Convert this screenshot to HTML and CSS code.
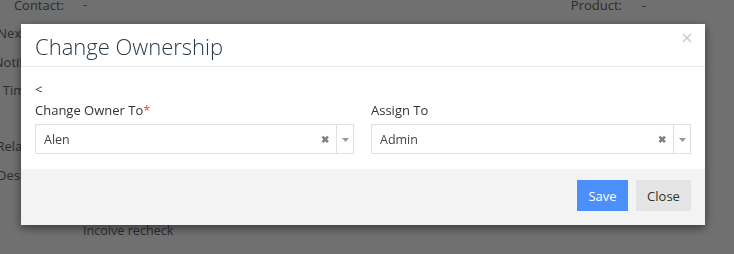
FILE: index.html
```html
<!DOCTYPE html>
<html>
<head>
<meta charset="utf-8">
<link rel="stylesheet" href="styles.css">
</head>
<body>
<div class="page">
  <div class="details">
    <div class="row"><span class="lbl">Contact:</span><span class="val">-</span><span class="lbl2">Product:</span><span class="val2">-</span></div>
    <div class="row"><span class="lbl">Next Visits:</span><span class="val"></span></div>
    <div class="row"><span class="lbl">Notified To:</span><span class="val"></span></div>
    <div class="row"><span class="lbl">Timelines:</span><span class="val"></span></div>
    <div class="row"><span class="lbl"></span><span class="val"></span></div>
    <div class="row"><span class="lbl">Related To:</span><span class="val"></span></div>
    <div class="row"><span class="lbl">Descriptor:</span><span class="val"></span></div>
    <div class="row"><span class="lbl"></span><span class="val"></span></div>
    <div class="row"><span class="lbl"></span><span class="val">Incoive recheck</span></div>
  </div>
</div>
<div class="overlay"></div>
<div class="modal">
  <div class="modal-header">
    <h4 class="modal-title">Change Ownership</h4>
    <span class="close-x">
      <svg width="10" height="10" viewBox="0 0 10 10"><path d="M1 1L9 9M9 1L1 9" stroke="#c8c8c8" stroke-width="1.3"/></svg>
    </span>
  </div>
  <div class="modal-body">
    <div class="back">&lt;</div>
    <div class="fields">
      <div class="field">
        <label class="flabel">Change Owner To<span class="req">*</span></label>
        <div class="select">
          <span class="sval">Alen</span>
          <span class="sclear">&#10006;</span>
          <span class="sarrow"><svg width="7" height="4" viewBox="0 0 7 4"><path d="M0 0H7L3.5 4Z" fill="#999"/></svg></span>
        </div>
      </div>
      <div class="field">
        <label class="flabel">Assign To</label>
        <div class="select">
          <span class="sval">Admin</span>
          <span class="sclear">&#10006;</span>
          <span class="sarrow"><svg width="7" height="4" viewBox="0 0 7 4"><path d="M0 0H7L3.5 4Z" fill="#999"/></svg></span>
        </div>
      </div>
    </div>
  </div>
  <div class="modal-footer">
    <button class="btn btn-save">Save</button>
    <button class="btn btn-close">Close</button>
  </div>
</div>
</body>
</html>
```
FILE: styles.css
```css
html, body {
  margin: 0;
  padding: 0;
  background: #fff;
  font-family: "Open Sans", "Liberation Sans", sans-serif;
  font-size: 13px;
  color: #666;
  overflow: hidden;
  width: 734px;
  height: 254px;
}
.page {
  width: 734px;
  height: 254px;
}
.details {
  margin-top: -9px;
}
.row {
  display: flex;
  height: 28.25px;
  line-height: 28px;
  white-space: nowrap;
}
.lbl {
  width: 64px;
  flex: none;
  display: flex;
  justify-content: flex-end;
}
.val {
  margin-left: 19px;
  width: 330px;
  flex: none;
  font-size: 12.6px;
}
.lbl2 {
  width: 209px;
  flex: none;
  display: flex;
  justify-content: flex-end;
}
.val2 {
  margin-left: 20px;
}
.overlay {
  position: fixed;
  inset: 0;
  background: rgba(0, 0, 0, 0.56);
}
.modal {
  position: fixed;
  left: 21px;
  top: 24px;
  width: 684px;
  background: #fff;
  box-shadow: 0 3px 9px rgba(0, 0, 0, 0.5);
  color: #333;
}
.modal-header {
  height: 42px;
  border-bottom: 1px solid #e8e8e8;
  display: flex;
  align-items: center;
  justify-content: space-between;
  padding: 0 13px 0 14px;
}
.modal-title {
  margin: 0;
  font-weight: 300;
  font-size: 22px;
  color: #2b3a4a;
  line-height: 28px;
  padding-top: 1px;
}
.close-x {
  align-self: flex-start;
  margin-top: 9px;
  display: flex;
}
.modal-body {
  padding: 14px 14px 15px 14px;
}
.back {
  font-size: 13px;
  line-height: 16px;
  color: #333;
  height: 15px;
  margin-bottom: 5px;
}
.fields {
  display: grid;
  grid-template-columns: 319px 320px;
  column-gap: 17px;
}
.flabel {
  display: block;
  font-size: 13px;
  line-height: 18px;
  margin-bottom: 5px;
  color: #333;
}
.req {
  color: #e74c3c;
}
.select {
  height: 28px;
  border: 1px solid #e0e0e0;
  display: flex;
  align-items: center;
}
.sval {
  flex: 1;
  padding-left: 8px;
  font-size: 12.5px;
  color: #444;
}
.sclear {
  font-size: 10px;
  color: #808080;
  margin-right: 7px;
  font-weight: bold;
}
.sarrow {
  width: 17px;
  height: 28px;
  border-left: 1px solid #e0e0e0;
  display: flex;
  align-items: center;
  justify-content: center;
  padding-top: 2px;
  box-sizing: border-box;
}
.modal-footer {
  background: #f3f3f3;
  height: 56px;
  box-sizing: border-box;
  padding: 11px 14px 0 0;
  display: flex;
  justify-content: flex-end;
  align-items: flex-start;
  gap: 8px;
}
.btn {
  border: none;
  height: 31px;
  font-family: "Open Sans", "Liberation Sans", sans-serif;
  font-size: 13px;
  padding: 0;
  margin: 0;
}
.btn-save {
  width: 51px;
  background: #4b8ffd;
  color: #fff;
}
.btn-close {
  width: 55px;
  background: #e4e4e4;
  color: #333;
}
```
